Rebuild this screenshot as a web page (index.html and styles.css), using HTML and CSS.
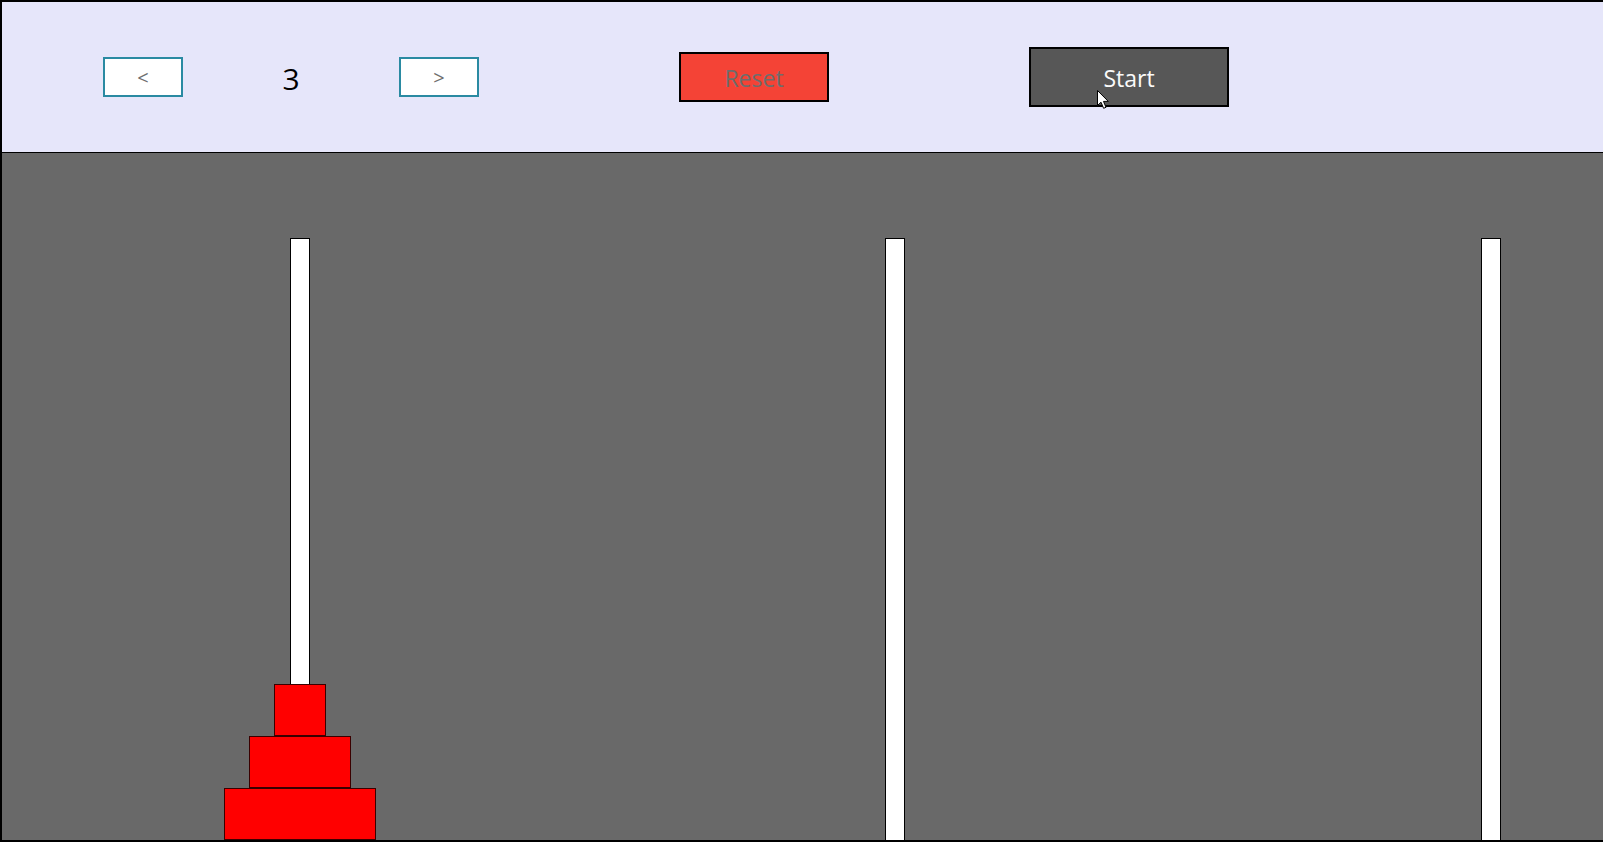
FILE: index.html
```html
<!DOCTYPE html>
<html>
<head>
<meta charset="utf-8">
<link rel="stylesheet" href="styles.css">
</head>
<body>
<div class="window">
  <header class="toolbar">
    <button class="step-btn">&lt;</button>
    <div class="count">3</div>
    <button class="step-btn">&gt;</button>
    <button class="reset-btn">Reset</button>
    <button class="start-btn">Start</button>
  </header>
  <main class="board">
    <div class="rod-col">
      <div class="peg"></div>
      <div class="stack">
        <div class="disk d1"></div>
        <div class="disk d2"></div>
        <div class="disk d3"></div>
      </div>
    </div>
    <div class="rod-col">
      <div class="peg"></div>
    </div>
    <div class="rod-col">
      <div class="peg"></div>
    </div>
  </main>
</div>
<svg class="cursor" width="13" height="20" viewBox="0 0 13 20">
  <path d="M0.5 0.5 L0.5 15.5 L4 12.2 L6.6 18.3 L9 17.3 L6.5 11.4 L11.3 11.4 Z" fill="#fff" stroke="#000" stroke-width="1" stroke-linejoin="miter"/>
</svg>
</body>
</html>
```
FILE: styles.css
```css
* { box-sizing: border-box; }
html, body {
  margin: 0;
  padding: 0;
  width: 1603px;
  height: 842px;
  overflow: hidden;
  font-family: "Open Sans", "Noto Sans", sans-serif;
}
.window {
  width: 1603px;
  height: 842px;
  border-top: 2px solid #000;
  border-left: 2px solid #000;
  border-bottom: 2px solid #000;
  display: flex;
  flex-direction: column;
  overflow: hidden;
}
.toolbar {
  height: 151px;
  flex: none;
  background: #e6e6fa;
  border-bottom: 1px solid #000;
  display: flex;
  align-items: center;
  padding-left: 101px;
}
.toolbar button {
  font-family: inherit;
  margin: 0;
  padding: 2px 0 0 0;
  cursor: default;
  display: flex;
  align-items: center;
  justify-content: center;
}
.step-btn {
  width: 80px;
  height: 40px;
  background: #fff;
  border: 2px solid #2a8aa2;
  color: #6e6e6e;
  font-size: 20px;
  line-height: 1;
}
.count {
  width: 216px;
  padding-top: 3px;
  text-align: center;
  font-size: 30px;
  color: #000;
  line-height: 1;
}
.reset-btn {
  margin-left: 200px !important;
  width: 150px;
  height: 50px;
  background: #f44336;
  border: 2px solid #000;
  color: #6d6d6d;
  font-size: 23px;
}
.start-btn {
  margin-left: 200px !important;
  width: 200px;
  height: 60px;
  background: #575757;
  border: 2px solid #000;
  color: #fafafa;
  font-size: 23px;
}
.board {
  flex: 1;
  background: #696969;
  display: grid;
  grid-template-columns: 596px 594px 598px;
  overflow: hidden;
}
.rod-col {
  display: grid;
  justify-items: center;
  align-items: end;
}
.peg {
  grid-area: 1 / 1;
  width: 20px;
  height: 602px;
  background: #fff;
  border: 1px solid #000;
  border-bottom: none;
}
.stack {
  grid-area: 1 / 1;
  display: flex;
  flex-direction: column;
  align-items: center;
}
.disk {
  height: 52px;
  background: #ff0000;
  border: 1px solid #3a0000;
}
.d1 { width: 52px; }
.d2 { width: 102px; }
.d3 { width: 152px; }
.cursor {
  position: absolute;
  left: 1097px;
  top: 90px;
}
```
